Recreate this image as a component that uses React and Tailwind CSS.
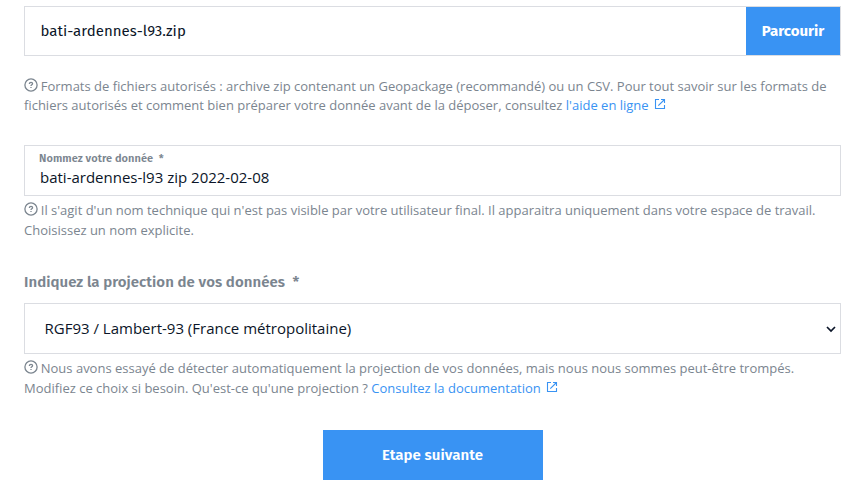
function HelpIcon() {
  return (
    <svg viewBox="0 0 14 14" className="mr-[2.75px] inline-block h-[14px] w-[14px] align-[-1px]" fill="none" stroke="currentColor" aria-hidden="true">
      <circle cx="7" cy="7" r="6.1" strokeWidth="1.3" />
      <path d="M5.4 5.9c0-1 .7-1.5 1.6-1.5s1.6.5 1.6 1.3C8.6 6.8 7 6.8 7 8" strokeWidth="1.3" />
      <path d="M7 8.9v1.2" strokeWidth="1.3" />
    </svg>
  );
}

function ExternalIcon() {
  return (
    <svg viewBox="0 0 12 12" className="ml-[5px] inline-block h-3 w-3 align-[0px]" fill="none" stroke="currentColor" strokeWidth="1.1" aria-hidden="true">
      <path d="M5 1.5H1.5v9h9V7" />
      <path d="M7 1.5h3.5V5M10.5 1.5 4.3 7.7" />
    </svg>
  );
}

function Help({ className, children }) {
  return (
    <p className={`whitespace-nowrap text-[13px] leading-[19.5px] text-[#7b858f] ${className}`}>
      <HelpIcon />
      {children}
    </p>
  );
}

function DocLink({ children }) {
  return (
    <a href="#" className="text-[#3993f3]">
      {children}
      <ExternalIcon />
    </a>
  );
}

export default function App() {
  return (
    <main className="h-[495px] w-[863px] overflow-hidden bg-white pl-6 pr-[22px] pt-[6px] font-['Open_Sans',sans-serif] text-[15px] text-[#0b1528]">
      <div className="flex h-[50px] border border-[#dbdde2]">
        <div className="flex flex-1 items-center pl-[15.5px] font-['Fira_Sans','Noto_Sans',sans-serif] tracking-[0.04px]">
          <span>bati-ardennes-l93.zip</span>
        </div>
        <button className="w-[94px] bg-[#3993f3] font-['Fira_Sans','Noto_Sans',sans-serif] font-bold text-white">
          Parcourir
        </button>
      </div>

      <Help className="mt-[20.5px]">
        Formats de fichiers autorisés : archive zip contenant un Geopackage (recommandé) ou un CSV. Pour tout savoir sur les formats de
        <br />
        fichiers autorisés et comment bien préparer votre donnée avant de la déposer, consultez <DocLink>l'aide en ligne</DocLink>
      </Help>

      <div className="mt-[29.5px] flex h-[51px] flex-col border border-[#dbdde2] pl-[15px] pt-[5px]">
        <label className="-ml-px mt-px h-[13px] font-['Fira_Sans','Noto_Sans',sans-serif] text-[11px] font-semibold leading-[14px] tracking-[0.07px] text-[#7b858f]">
          Nommez votre donnée&nbsp; *
        </label>
        <span className="leading-6">bati-ardennes-l93 zip 2022-02-08</span>
      </div>

      <Help className="mt-[5px]">
        Il s'agit d'un nom technique qui n'est pas visible par votre utilisateur final. Il apparaitra uniquement dans votre espace de travail.
        <br />
        Choisissez un nom explicite.
      </Help>

      <h2 className="mt-[30px] font-['Fira_Sans','Noto_Sans',sans-serif] font-semibold leading-6 tracking-[0.04px] text-[#7b858f]">
        Indiquez la projection de vos données&nbsp; *
      </h2>

      <div className="mt-[9px] flex h-[51px] items-center justify-between border border-[#dbdde2] pl-[19.5px] pr-[4px]">
        <span>RGF93 / Lambert-93 (France métropolitaine)</span>
        <svg viewBox="0 0 10 10" className="h-[10px] w-[10px]" fill="none" stroke="currentColor" strokeWidth="1.7" aria-hidden="true">
          <path d="m1 3 4 4 4-4" />
        </svg>
      </div>

      <Help className="mt-[5px]">
        Nous avons essayé de détecter automatiquement la projection de vos données, mais nous nous sommes peut-être trompés.
        <br />
        Modifiez ce choix si besoin. Qu'est-ce qu'une projection ? <DocLink>Consultez la documentation</DocLink>
      </Help>

      <button className="mx-auto mt-8 block h-[50px] w-[220px] bg-[#3993f3] font-['Fira_Sans','Noto_Sans',sans-serif] font-semibold tracking-[0.05px] text-white">
        Etape suivante
      </button>
    </main>
  );
}
